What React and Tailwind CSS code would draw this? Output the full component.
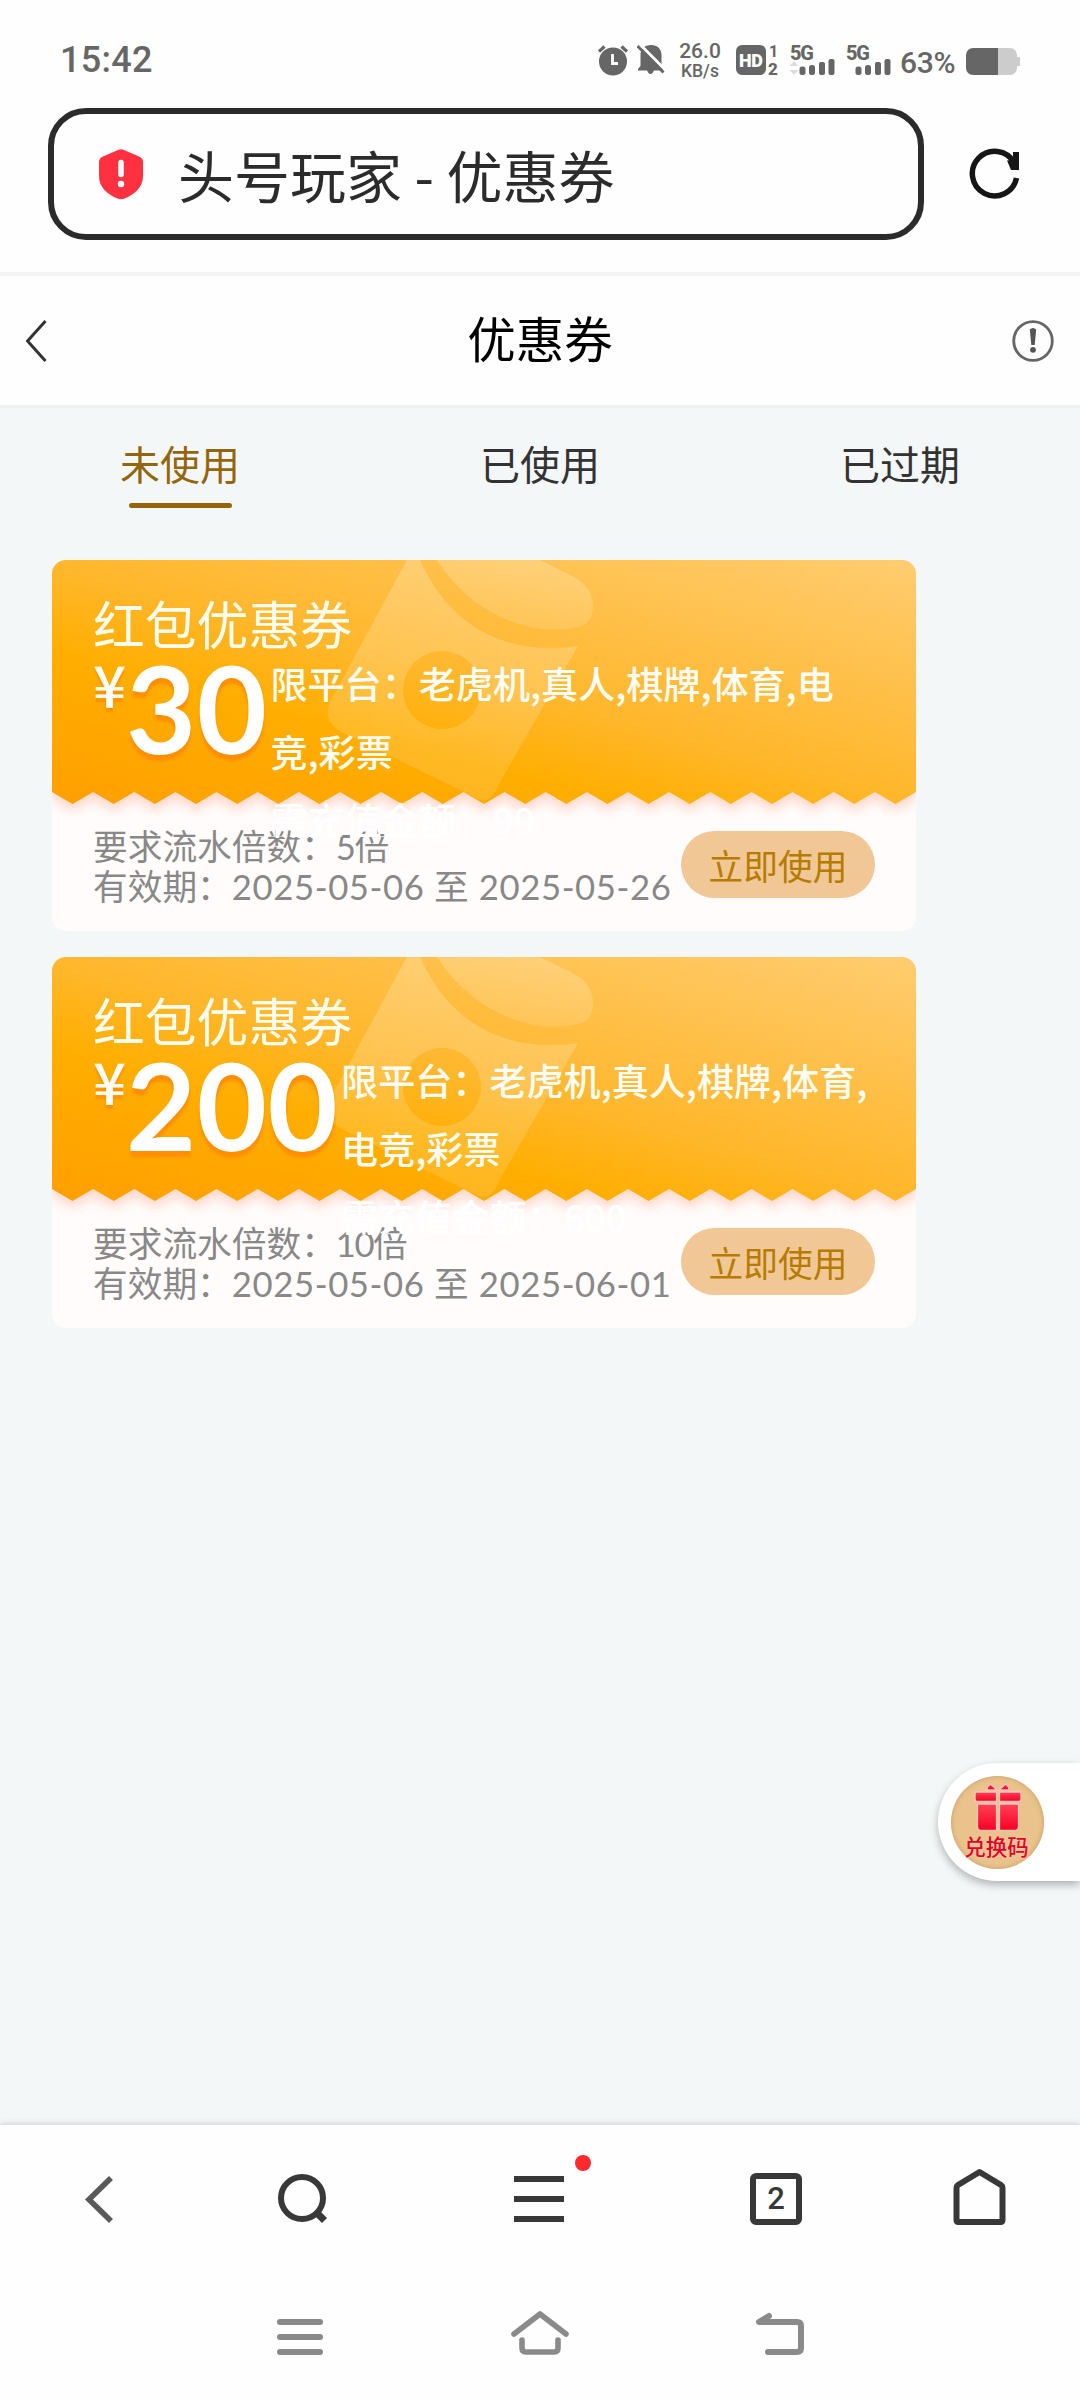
import clsx from 'clsx';

const coupons = [
    {
        id: 1,
        title: '红包优惠券',
        amount: '30',
        platforms: ['限平台：老虎机,真人,棋牌,体育,电', '竞,彩票'],
        deposit: '99',
        turnover: '5',
        from: '2025-05-06',
        to: '2025-05-26',
    },
    {
        id: 2,
        title: '红包优惠券',
        amount: '200',
        platforms: ['限平台：老虎机,真人,棋牌,体育,', '电竞,彩票'],
        deposit: '600',
        turnover: '10',
        from: '2025-05-06',
        to: '2025-06-01',
    },
];

const tabs = ['未使用', '已使用', '已过期'];

// Zigzag edge: 21 teeth over the 864px card width
const TEETH = 21;
const step = 864 / TEETH;
let zigzag = '';
for (let i = TEETH; i > 0; i--) {
    zigzag += `L${(i - 0.5) * step} 244L${(i - 1) * step} 232`;
}
const ticketPath = `M0 0H864V232${zigzag}Z`;

function Signal({ arrows }) {
    return (
        <svg className="overflow-visible" width="46" height="32" viewBox="0 0 46 32" fill="#666">
            <text x="0" y="16" fontFamily="Roboto" fontWeight="800" fontSize="20" textLength="24">5G</text>
            {arrows && <path d="M4 17l4.5 5h-9zM4 31l4.5-5h-9z" fill="#ddd" />}
            <rect x="9.5" y="22.5" width="6" height="8.5" rx="2.5" />
            <rect x="19" y="21" width="6" height="10" rx="2.5" />
            <rect x="29" y="18" width="6" height="13" rx="2" />
            <rect x="38.5" y="15" width="6" height="16" rx="2" />
        </svg>
    );
}

function StatusBar() {
    return (
        <div className="h-[108px] pl-[60px] pr-[60px] pt-[12px] flex items-center text-[#666] font-[Roboto]">
            <span className="text-[36px] font-medium tracking-[0.3px]">15:42</span>

            <div className="ml-auto flex items-center">
                <svg width="30" height="32" viewBox="0 0 30 32">
                    <circle cx="15" cy="17.5" r="14" fill="#666" />
                    <path d="M1 7.500l5.500-5M29 7.500l-5.500-5" stroke="#666" strokeWidth="3.200" />
                    <path d="M14.500 10v9.500h5.500" stroke="#fff" strokeWidth="2.800" fill="none" />
                </svg>
                <svg className="ml-[9px]" width="28" height="32" viewBox="0 0 28 32">
                    <path d="M14 1c6.500 0 10.500 4 10.500 10v11l2 3v1.500h-9.500l-1.500 2.500a2.500 2.500 0 0 1-4 0l-1.500-2.500h-9v-1.500l2.500-3v-11c0-6 4-10 10.500-10z" fill="#666" />
                    <path d="M2.500 0l26 26" stroke="#fff" strokeWidth="3" />
                    <path d="M0.500 2l26 26.500" stroke="#666" strokeWidth="2.800" />
                </svg>
                <div className="ml-[14px] w-[42px] text-center font-medium">
                    <div className="text-[21px] leading-[21px]">26.0</div>
                    <div className="text-[17.500px] leading-[18px]">KB/s</div>
                </div>
                <svg className="ml-[15px] overflow-visible" width="43" height="32" viewBox="0 0 43 32" fill="#666">
                    <rect x="0" y="1" width="30" height="30" rx="6" />
                    <text x="3" y="22.500" fontFamily="Roboto" fontWeight="900" fontSize="18" textLength="24" fill="#fff">HD</text>
                    <text x="33" y="13" fontFamily="Roboto" fontWeight="700" fontSize="16">1</text>
                    <text x="32" y="30.500" fontFamily="Roboto" fontWeight="800" fontSize="17">2</text>
                </svg>
                <div className="ml-[11px]"><Signal arrows /></div>
                <div className="ml-[10px]"><Signal /></div>
                <span className="ml-[8px] w-[57px] pt-[6px] text-[30px] leading-[32px] font-medium tracking-[-0.300px]">63%</span>
                <svg className="ml-[9px] mt-1" width="54" height="28" viewBox="0 0 54 28">
                    <path d="M32 0h12a7 7 0 0 1 7 7v2h3v9h-3v2a7 7 0 0 1-7 7h-12z" fill="#ccc" />
                    <path d="M7 0h25v27h-25a7 7 0 0 1-7-7v-13a7 7 0 0 1 7-7z" fill="#666" />
                </svg>
            </div>
        </div>
    );
}

function AddressBar() {
    return (
        <div className="h-[168px] pl-12 flex items-start border-b-4 border-[#f4f4f4]">
            <div className="w-[876px] h-[132px] pl-[43px] flex items-center border-[6px] border-[#2b2b2b] rounded-[38px]">
                <svg width="48" height="52" viewBox="0 0 48 52">
                    <path d="M21 2q3-1.400 6 0l15 6.500q4 1.800 4 5.500v14c0 12-9 18.500-18.500 22.500q-3.500 1.500-7 0c-9.500-4-18.500-10.500-18.500-22.500v-14q0-3.700 4-5.500z" fill="#ff3141" />
                    <path d="M24 14.500v12" stroke="#fff" strokeWidth="5.500" strokeLinecap="round" />
                    <circle cx="24" cy="36" r="3.200" fill="#fff" />
                </svg>
                <span className="ml-[33px] text-[56px] leading-[70px] text-[#2b2b2b]">头号玩家 - 优惠券</span>
            </div>
            <svg className="ml-[44px] mt-[39px]" width="54" height="54" viewBox="0 0 54 54">
                <path d="M48.500 31a22.300 22.300 0 1 1-2.500-15.500" fill="none" stroke="#151515" strokeWidth="5.500" />
                <path d="M45 5h6v18h-6z M39 13.500l7-1v10.500h-3z" fill="#151515" />
            </svg>
        </div>
    );
}

function Header() {
    return (
        <div className="h-[132px] px-[26px] flex items-center justify-between border-b-[3px] border-[#f0f0f0]">
            <svg width="42" height="42" viewBox="0 0 42 42">
                <path d="M19.500 1l-18 20 18 20" fill="none" stroke="#333" strokeWidth="3" />
            </svg>
            <h1 className="mb-[8px] text-[48.500px] leading-[60px] text-black">优惠券</h1>
            <svg width="42" height="42" viewBox="0 0 42 42">
                <circle cx="21" cy="21" r="19.300" fill="none" stroke="#666" strokeWidth="2.800" />
                <path d="M17.800 9.500q3.200-3 6.400 0l-1.500 15.500h-3.400z" fill="#555" />
                <circle cx="21" cy="29.800" r="2.900" fill="#555" />
            </svg>
        </div>
    );
}

function TicketBackground({ id }) {
    return (
        <svg className="absolute inset-0" width="864" height="371" viewBox="0 0 864 371">
            <defs>
                <linearGradient id={`fill-${id}`} gradientUnits="userSpaceOnUse" x1="864" y1="0" x2="745" y2="443">
                    <stop offset="0" stopColor="#ffcc70" />
                    <stop offset="0.5" stopColor="#ffb72c" />
                    <stop offset="0.68" stopColor="#ffae00" />
                    <stop offset="1" stopColor="#ff9f00" />
                </linearGradient>
                <linearGradient id={`mark-${id}`} x1="0.5" y1="0" x2="0.4" y2="1">
                    <stop offset="0" stopColor="#fff" stopOpacity="0.22" />
                    <stop offset="1" stopColor="#fff" stopOpacity="0.12" />
                </linearGradient>
                <filter id={`glow-${id}`} x="-5%" y="-5%" width="110%" height="125%">
                    <feGaussianBlur stdDeviation="6" />
                </filter>
            </defs>
            <path d={ticketPath} transform="translate(0 7)" fill="#ff6a3a" opacity="0.25" filter={`url(#glow-${id})`} />
            <path d={ticketPath} fill={`url(#fill-${id})`} />
            {/* Red envelope watermark */}
            <g fill={`url(#mark-${id})`}>
                <path
                    fillRule="evenodd"
                    d="M355 0H368C390 50 432 88 498 88Q512 88.500 526 86L448 222L443 232Q436 244 424 238L290 172Q270 162 278 142ZM390 91a39 39 0 1 0 0.010 0Z"
                />
                <path d="M385 0H488L520 16Q541 26 541 47Q540 62 530 66Q512 71 490 69C444 62 410 38 385 0Z" />
            </g>
        </svg>
    );
}

function CouponCard({ coupon }) {
    return (
        <div className="relative w-[864px] h-[371px] pt-[37px] pl-[41px] pr-[41px] bg-[#fffcfb] rounded-[14px] overflow-hidden">
            <TicketBackground id={coupon.id} />

            <h2 className="relative text-[51.800px] leading-[52px] text-[#fffdf0]">{coupon.title}</h2>

            <div className="relative z-10 h-[178px] flex items-start text-[#fffdf5] whitespace-nowrap">
                <span className="mt-[5px] text-[58px] leading-[58px] font-medium [text-shadow:0_4px_2px_#ff8f00]">¥</span>
                <span className="mt-[-2px] text-[121px] leading-[121px] font-bold font-[Lato] tracking-[0.500px] text-white [text-shadow:0_6px_3px_#ff8f00]">
                    {coupon.amount}
                </span>
                <div className="ml-[3px] text-[37.100px] leading-[68px] font-medium">
                    {coupon.platforms.map((line) => (
                        <p key={line}>{line}</p>
                    ))}
                    <p className="text-white">需充值金额：{coupon.deposit}</p>
                </div>
            </div>

            <div className="relative flex items-start justify-between">
                <div className="text-[34.700px] leading-[39.500px] text-[#888] font-[Lato,'Noto_Sans_CJK_SC',sans-serif] whitespace-nowrap">
                    <p>要求流水倍数：<span className="tracking-[-1.500px]">{coupon.turnover}</span>倍</p>
                    <p>有效期：<span className="tracking-[0.600px]">{coupon.from} 至 {coupon.to}</span></p>
                </div>
                <button className="mt-[4px] w-[194px] h-[67px] rounded-full bg-[#f0c795] text-[34.700px] leading-[64px] text-[#b67b00]">
                    立即使用
                </button>
            </div>
        </div>
    );
}

function RedeemButton() {
    return (
        <div className="absolute right-0 top-[1763px] w-[142px] h-[118px] pl-[13px] flex items-center bg-white rounded-l-full shadow-[0_4px_8px_rgba(0,0,0,0.28)]">
            <div className="w-[93px] h-[93px] flex flex-col items-center rounded-full bg-[#e9c28c] shadow-[inset_0_0_5px_#c99a66]">
                <svg className="mt-[6px]" width="50" height="50" viewBox="0 0 50 50">
                    <defs>
                        <linearGradient id="gift" x1="0" y1="0" x2="0" y2="1">
                            <stop offset="0" stopColor="#ff4058" />
                            <stop offset="1" stopColor="#f80022" />
                        </linearGradient>
                    </defs>
                    <g fill="url(#gift)" stroke="#ffc4bb" strokeWidth="1.300">
                        <path d="M24 8H13.500q1-4 4-6zM26 8h10.500q-1-4-4-6z" />
                        <path d="M3 10h20.500v9.500h-19q-2.500 0-2.500-2.500v-5q0-2 1-2zM26.500 10h20.500q1 0 1 2v5q0 2.500-2.500 2.500h-19z" />
                        <path d="M4.500 22h19v26.500h-15q-4 0-4-4zM26.500 22h19v22.500q0 4-4 4h-15z" />
                    </g>
                </svg>
                <span className="mt-[2px] mr-[2px] text-[21.500px] leading-[24px] font-medium text-[#e60019] [text-shadow:0_0_2px_#ffd0c4,0_0_2px_#ffd0c4]">兑换码</span>
            </div>
        </div>
    );
}

function BrowserBar() {
    return (
        <div className="relative h-[150px] pt-[40px] grid grid-cols-[200px_203px_274px_198px_205px] justify-items-center items-start bg-[#fefefe] shadow-[0_-1px_6px_rgba(0,0,0,0.16)]">
            <svg width="64" height="64" viewBox="0 0 64 64" fill="none">
                <path d="M43 13l-22 21.500 22 21.500" stroke="#595959" strokeWidth="5.600" />
            </svg>
            <svg width="64" height="64" viewBox="0 0 64 64" fill="none" stroke="#383838">
                <circle cx="32" cy="33" r="21" strokeWidth="6" />
                <path d="M46 47l8.500 8.500" strokeWidth="7" />
            </svg>
            <div className="relative">
                <svg width="64" height="64" viewBox="0 0 64 64" stroke="#383838">
                    <path d="M6 14h50M6 34h50M6 54h50" strokeWidth="6" />
                </svg>
                <span className="absolute left-[67px] top-[-10px] w-4 h-4 rounded-full bg-[#ff292e]"></span>
            </div>
            <div className="mt-[8px] w-[52px] h-[52px] flex items-center justify-center border-[6px] border-[#383838] rounded-[6px] text-[31px] leading-[30px] font-medium font-[Roboto] text-[#383838]">
                2
            </div>
            <svg width="64" height="64" viewBox="0 0 64 64" fill="none">
                <path d="M10.500 23q0-2 1.500-3l21.500-13 21.500 13q1.500 1 1.500 3v32q0 2-2 2h-42q-2 0-2-2z" stroke="#383838" strokeWidth="6" strokeLinejoin="round" />
            </svg>
        </div>
    );
}

function SystemNav() {
    return (
        <div className="relative h-[125px] px-[180px] pt-[32px] grid grid-cols-3 justify-items-center bg-[#fefefe]">
            <svg width="60" height="56" viewBox="0 0 60 56" stroke="#8a8a8a" strokeWidth="6" strokeLinecap="round">
                <path d="M10 15h40M10 30h40M10 45h40" />
            </svg>
            <svg width="60" height="56" viewBox="0 0 60 56" fill="none" stroke="#8a8a8a" strokeWidth="5.600" strokeLinecap="round" strokeLinejoin="round">
                <path d="M4 27l26-20 26 20M12 33v8q0 4 4 4h28q4 0 4-4v-8" />
            </svg>
            <svg width="60" height="56" viewBox="0 0 60 56" fill="none" stroke="#8a8a8a" strokeWidth="6" strokeLinecap="round" strokeLinejoin="round">
                <path d="M19 9l-10 6h38q4 0 4 4v22q0 4-4 4H18" />
            </svg>
        </div>
    );
}

export default function App() {
    return (
        <div className="relative w-[1080px] h-[2400px] flex flex-col bg-[#fefefe] overflow-hidden font-['Noto_Sans_CJK_SC',sans-serif]">
            <StatusBar />
            <AddressBar />
            <Header />

            <main className="flex-1 bg-[#f4f7f8]">
                <div className="h-[152px] grid grid-cols-3">
                    {tabs.map((tab, i) => (
                        <div
                            key={tab}
                            className={clsx('pt-[27px] flex flex-col items-center text-[40px] leading-[56px]', i === 0 ? 'text-[#94660c]' : 'text-[#333]')}
                        >
                            {tab}
                            {i === 0 && <span className="mt-[12px] w-[103px] h-[5px] rounded-full bg-[#94660c]"></span>}
                        </div>
                    ))}
                </div>

                <div className="pl-[52px] flex flex-col gap-[26px]">
                    {coupons.map((coupon) => (
                        <CouponCard key={coupon.id} coupon={coupon} />
                    ))}
                </div>
            </main>

            <RedeemButton />
            <BrowserBar />
            <SystemNav />
        </div>
    );
}
